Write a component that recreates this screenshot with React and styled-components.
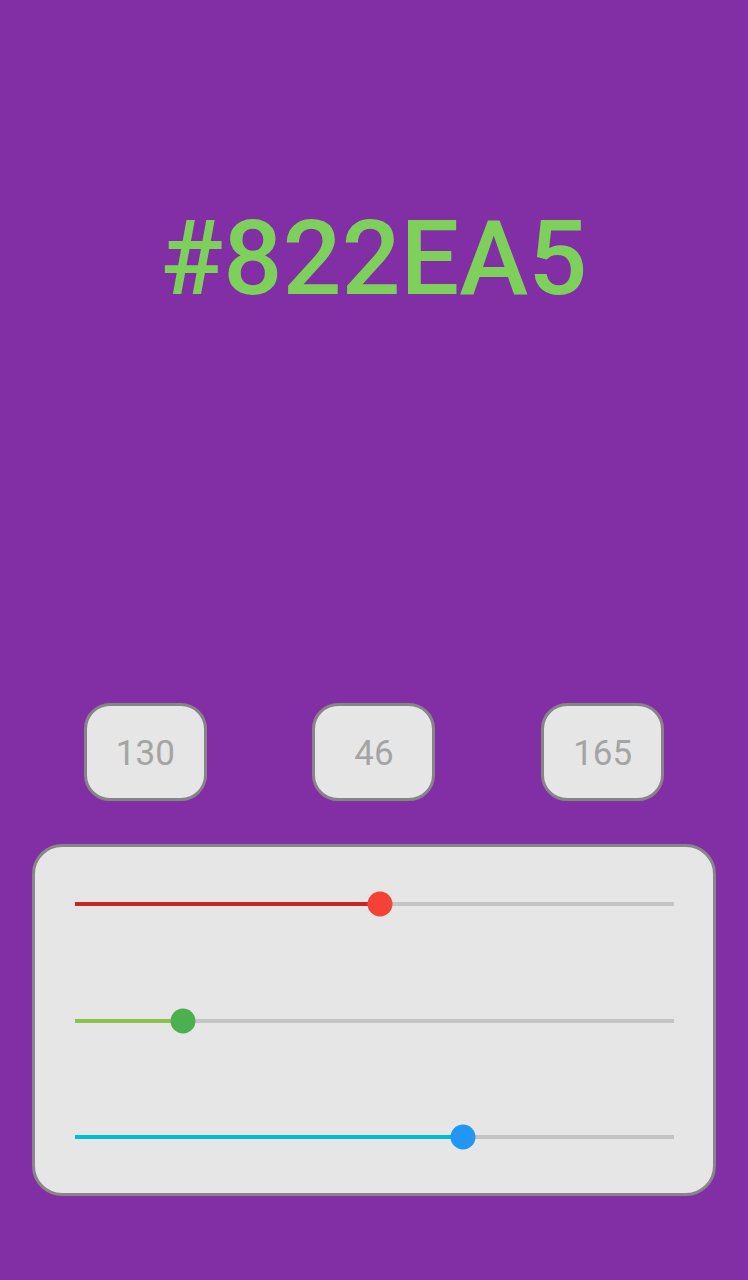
import styled, { createGlobalStyle } from 'styled-components';

const rgb = { r: 130, g: 46, b: 165 };

const toHex = ({ r, g, b }) =>
  '#' + [r, g, b].map((v) => v.toString(16).padStart(2, '0')).join('').toUpperCase();

const inverse = ({ r, g, b }) => toHex({ r: 255 - r, g: 255 - g, b: 255 - b });

const sliders = [
  { key: 'r', active: '#c62828', thumb: '#f44336' },
  { key: 'g', active: '#8bc34a', thumb: '#4caf50' },
  { key: 'b', active: '#00bcd4', thumb: '#2196f3' },
];

export default function App() {
  const bg = toHex(rgb);

  return (
    <>
      <GlobalStyle />
      <Screen $bg={bg}>
        <Title $color={inverse(rgb)}>{bg}</Title>

        <ValueRow>
          {sliders.map((s) => (
            <ValueCell key={s.key}>
              <ValueBox>{rgb[s.key]}</ValueBox>
            </ValueCell>
          ))}
        </ValueRow>

        <Panel>
          {sliders.map((s) => {
            const pct = (rgb[s.key] / 255) * 100;
            return (
              <Track key={s.key}>
                <Fill $color={s.active} style={{ width: `${pct}%` }} />
                <Thumb $color={s.thumb} style={{ left: `${pct}%` }} />
              </Track>
            );
          })}
        </Panel>
      </Screen>
    </>
  );
}

const GlobalStyle = createGlobalStyle`
  html, body {
    margin: 0;
    padding: 0;
  }
  body {
    font-family: Roboto, "Noto Sans", sans-serif;
  }
`;

const Screen = styled.div`
  width: 748px;
  height: 1280px;
  box-sizing: border-box;
  background: ${(p) => p.$bg};
  display: flex;
  flex-direction: column;
  padding: 0 31px;
`;

const Title = styled.h1`
  margin: 207px 0 0;
  height: 104px;
  font-size: 104px;
  line-height: 1;
  font-weight: 500;
  text-align: center;
  color: ${(p) => p.$color};
`;

const ValueRow = styled.div`
  display: grid;
  grid-template-columns: repeat(3, 1fr);
  margin-top: 392px;
`;

const ValueCell = styled.div`
  display: flex;
  justify-content: center;
`;

const ValueBox = styled.div`
  width: 123px;
  height: 98px;
  box-sizing: border-box;
  border: 3px solid #858585;
  border-radius: 26px;
  background: #e6e6e6;
  color: #a4a4a4;
  font-size: 35px;
  padding-top: 2px;
  display: flex;
  align-items: center;
  justify-content: center;
`;

const Panel = styled.div`
  margin: 43px 1px 0;
  height: 352px;
  box-sizing: border-box;
  border: 3px solid #868686;
  border-radius: 30px;
  background: #e6e6e6;
  padding: 55px 39px 0 40px;
  display: flex;
  flex-direction: column;
  gap: 112.5px;
`;

const Track = styled.div`
  position: relative;
  height: 4px;
  background: #c4c4c4;
`;

const Fill = styled.div`
  height: 100%;
  background: ${(p) => p.$color};
`;

const Thumb = styled.div`
  position: absolute;
  top: 50%;
  width: 25px;
  height: 25px;
  border-radius: 50%;
  background: ${(p) => p.$color};
  transform: translate(-50%, -50%);
`;
